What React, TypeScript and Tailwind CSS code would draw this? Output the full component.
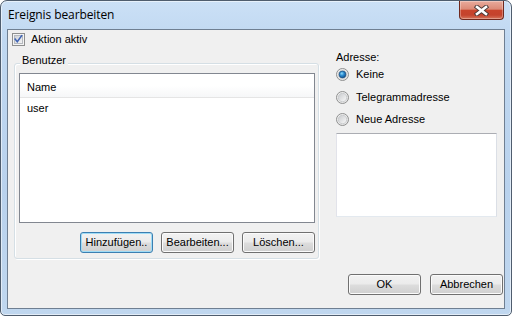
import React from "react";

function Checkbox() {
  return (
    <svg width="13" height="13" viewBox="0 0 13 13" className="shrink-0">
      <defs>
        <linearGradient id="cbin" x1="0" y1="0" x2="1" y2="1">
          <stop offset="0" stopColor="#cbcfd5" />
          <stop offset="1" stopColor="#f6f6f6" />
        </linearGradient>
      </defs>
      <rect x="0.5" y="0.5" width="12" height="12" fill="#f4f4f4" stroke="#8e8f8f" />
      <rect x="2.5" y="2.5" width="8" height="8" fill="url(#cbin)" stroke="#b5b9bf" />
      <path d="M3.2 6.2 L5.3 8.8 L9.6 2.8" fill="none" stroke="#4064b4" strokeWidth="1.6" strokeLinecap="square" />
    </svg>
  );
}

function Radio({ on }: { on?: boolean }) {
  return (
    <svg width="13" height="13" viewBox="0 0 13 13" className="shrink-0">
      <defs>
        <linearGradient id="rdout" x1="0" y1="0" x2="1" y2="1">
          <stop offset="0" stopColor="#f2f2f2" />
          <stop offset="1" stopColor="#e2e2e2" />
        </linearGradient>
        <linearGradient id="rdin" x1="0" y1="0" x2="1" y2="1">
          <stop offset="0" stopColor="#c8cacd" />
          <stop offset="1" stopColor="#fafafa" />
        </linearGradient>
        <radialGradient id="rdon" cx="0.4" cy="0.35" r="0.7">
          <stop offset="0" stopColor="#8fdaf8" />
          <stop offset="0.45" stopColor="#2a8ad0" />
          <stop offset="1" stopColor="#0f4a84" />
        </radialGradient>
      </defs>
      <circle cx="6.5" cy="6.5" r="6" fill="url(#rdout)" stroke="#8e8f8f" />
      <circle cx="6.5" cy="6.5" r="4.2" fill="url(#rdin)" stroke="#c4c6c9" strokeWidth="0.8" />
      {on && <circle cx="6.5" cy="6.5" r="3.4" fill="url(#rdon)" stroke="#1b4f80" strokeWidth="0.7" />}
    </svg>
  );
}

function Btn({ children, def, wide }: { children: React.ReactNode; def?: boolean; wide?: boolean }) {
  const base =
    "h-[21px] rounded-[3px] border flex items-center justify-center text-[11px] leading-[13px] text-black bg-[linear-gradient(to_bottom,#f2f2f2_0%,#ebebeb_48%,#dddddd_52%,#cfcfcf_100%)]";
  const look = def
    ? "border-[#3c7fb1] shadow-[inset_0_0_0_1px_#9fdcf6]"
    : "border-[#707070] shadow-[inset_0_0_0_1px_#fbfbfb]";
  const w = wide ? "w-[74px]" : "w-[73px]";
  return <div className={`${base} ${look} ${w}`}>{children}</div>;
}

function CloseBtn() {
  return (
    <div className="mr-[7px] w-[45px] h-[19px] rounded-b-[4px] border border-t-0 border-[#70291e] flex items-center justify-center bg-[linear-gradient(to_bottom,#e9ab9c_0%,#dc8a77_45%,#c8442c_52%,#c4432d_78%,#d6765c_100%)] shadow-[inset_0_0_0_1px_rgba(255,255,255,0.3)]">
      <svg width="15" height="11" viewBox="0 0 15 11">
        <path d="M3 2 L12 9 M12 2 L3 9" stroke="#4a3a38" strokeWidth="4.4" strokeLinecap="square" />
        <path d="M3 2 L12 9 M12 2 L3 9" stroke="#ffffff" strokeWidth="2.6" strokeLinecap="square" />
      </svg>
    </div>
  );
}

export default function App() {
  return (
    <div className="w-[513px] h-[317px] bg-white font-['Liberation_Sans',Arial,sans-serif]">
      <div className="w-[512px] h-[316px] flex flex-col rounded-t-[7px] rounded-b-[5px] border border-[#4f5d6e] bg-[linear-gradient(to_bottom,#cbe0f6_0%,#c0d8f1_12%,#b9d2ed_60%,#c0d7ef_100%)] shadow-[inset_0_0_0_1px_rgba(255,255,255,0.55)]">
        <div className="h-[28px] shrink-0 flex items-start justify-between">
          <span className="ml-[7px] mt-[6px] text-[12px] leading-[15px] text-black font-['Open_Sans',sans-serif] tracking-[-0.1px]">
            Ereignis bearbeiten
          </span>
          <CloseBtn />
        </div>
        <div className="ml-[6px] w-[498px] h-[280px] border border-[#6f7f92] bg-[#f0f0f0] flex flex-col text-[11px] leading-[13px] text-black">
          <div className="flex items-center ml-[4px] mt-[3px] h-[13px]">
            <Checkbox />
            <span className="ml-[6px]">Aktion aktiv</span>
          </div>
          <div className="flex items-start">
            <div className="relative ml-[6px] mt-[17px] w-[305px] h-[196px] rounded-[3px] border border-[#d5dfe5] shadow-[inset_1px_1px_0_#ffffff,1px_1px_0_#ffffff] flex flex-col pl-[4px] pr-[3px] pt-[9px]">
              <span className="absolute -top-[10px] left-[5px] px-[2px] bg-[#f0f0f0]">Benutzer</span>
              <div className="w-[296px] h-[150px] border border-[#828790] bg-white flex flex-col">
                <div className="h-[24px] shrink-0 flex items-center pt-[3px] pl-[7px] border-b border-[#e5e5e5] bg-[linear-gradient(to_bottom,#ffffff_0%,#ffffff_50%,#f6f7f8_100%)]">
                  Name
                </div>
                <div className="mt-[4px] pl-[7px]">user</div>
              </div>
              <div className="mt-[9px] flex justify-end gap-[8px]">
                <Btn def>Hinzufügen..</Btn>
                <Btn>Bearbeiten...</Btn>
                <Btn>Löschen...</Btn>
              </div>
            </div>
            <div className="ml-[17px] mt-[5px] flex flex-col">
              <span>Adresse:</span>
              <div className="mt-[4px] flex items-center h-[13px]">
                <Radio on />
                <span className="ml-[7px]">Keine</span>
              </div>
              <div className="mt-[10px] flex items-center h-[13px]">
                <Radio />
                <span className="ml-[7px]">Telegrammadresse</span>
              </div>
              <div className="mt-[9px] flex items-center h-[13px]">
                <Radio />
                <span className="ml-[7px]">Neue Adresse</span>
              </div>
              <div className="mt-[7px] w-[161px] h-[84px] bg-white border border-t-[#abadb3] border-l-[#e2e3ea] border-r-[#dbdfe6] border-b-[#e3e9ef]" />
            </div>
          </div>
          <div className="mt-auto mb-[13px] mr-[1px] flex justify-end gap-[9px]">
            <Btn>OK</Btn>
            <Btn>Abbrechen</Btn>
          </div>
        </div>
      </div>
    </div>
  );
}
